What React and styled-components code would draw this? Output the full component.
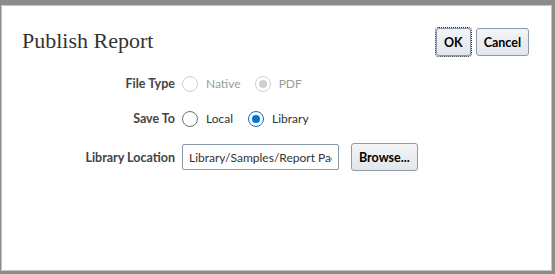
import React from "react";
import styled, { createGlobalStyle, css } from "styled-components";

const Global = createGlobalStyle`
  html, body {
    margin: 0;
    padding: 0;
    background: #8c8c8c;
  }
  body {
    font-family: Lato, "Noto Sans", sans-serif;
  }
`;

const Dialog = styled.div`
  box-sizing: border-box;
  margin: 5px 3px 3px 1px;
  height: 266px;
  background: #fff;
  border: 1px solid #c4c4c4;
  display: flex;
  flex-direction: column;
`;

const Header = styled.div`
  display: flex;
  justify-content: space-between;
  align-items: flex-start;
  padding: 22px 22px 0 20px;
`;

const Title = styled.h1`
  margin: -1px 0 0;
  font-family: "Liberation Serif", "Times New Roman", serif;
  font-weight: normal;
  font-size: 22px;
  line-height: 28px;
  color: #333;
`;

const Buttons = styled.div`
  display: flex;
  gap: 5px;
`;

const Button = styled.button`
  box-sizing: border-box;
  height: 28px;
  padding: 0 7px;
  font-family: Lato, "Noto Sans", sans-serif;
  font-weight: bold;
  font-size: 12.5px;
  color: #000;
  background: linear-gradient(#f3f5f7, #e2e6ea);
  border: 1px solid #8d9aa8;
  border-radius: 3px;
  ${(p) =>
    p.$focused &&
    css`
      outline: 1px dotted #222;
      outline-offset: 0;
    `}
`;

const Form = styled.div`
  display: grid;
  grid-template-columns: 173px auto;
  column-gap: 7px;
  margin-top: 10px;
`;

const Label = styled.div`
  font-weight: bold;
  font-size: 12.5px;
  color: #444;
  display: flex;
  align-items: center;
  justify-content: flex-end;
  height: ${(p) => p.$h}px;
`;

const Field = styled.div`
  display: flex;
  align-items: center;
  height: ${(p) => p.$h}px;
`;

const Option = styled.label`
  display: flex;
  align-items: center;
  gap: 8px;
  margin-right: ${(p) => p.$gap}px;
  font-size: 12px;
  color: ${(p) => (p.$disabled ? "#9a9a9a" : "#333")};
`;

const Radio = styled.span`
  box-sizing: border-box;
  width: 16px;
  height: 16px;
  border-radius: 50%;
  background: #fff;
  border: 1px solid
    ${(p) => (p.$disabled ? "#cfcfcf" : p.$checked ? "#0572ce" : "#6f6f6f")};
  display: flex;
  align-items: center;
  justify-content: center;
  &::after {
    content: "";
    width: 8px;
    height: 8px;
    border-radius: 50%;
    background: ${(p) => (p.$disabled ? "#cfcfcf" : "#0572ce")};
    display: ${(p) => (p.$checked ? "block" : "none")};
  }
`;

const Input = styled.input`
  box-sizing: border-box;
  width: 157px;
  height: 26px;
  padding: 0 6px;
  border: 1px solid #8797a8;
  border-radius: 2px;
  font-family: Lato, "Noto Sans", sans-serif;
  font-size: 12px;
  color: #333;
  margin-right: 12px;
`;

export default function App() {
  return (
    <>
      <Global />
      <Dialog>
        <Header>
          <Title>Publish Report</Title>
          <Buttons>
            <Button $focused>OK</Button>
            <Button>Cancel</Button>
          </Buttons>
        </Header>
        <Form>
          <Label $h={35}>File Type</Label>
          <Field $h={35}>
            <Option $disabled $gap={14}>
              <Radio $disabled />
              Native
            </Option>
            <Option $disabled>
              <Radio $disabled $checked />
              PDF
            </Option>
          </Field>
          <Label $h={35}>Save To</Label>
          <Field $h={35}>
            <Option $gap={15}>
              <Radio />
              Local
            </Option>
            <Option>
              <Radio $checked />
              Library
            </Option>
          </Field>
          <Label $h={42}>Library Location</Label>
          <Field $h={42}>
            <Input defaultValue="Library/Samples/Report Package" />
            <Button>Browse...</Button>
          </Field>
        </Form>
      </Dialog>
    </>
  );
}
